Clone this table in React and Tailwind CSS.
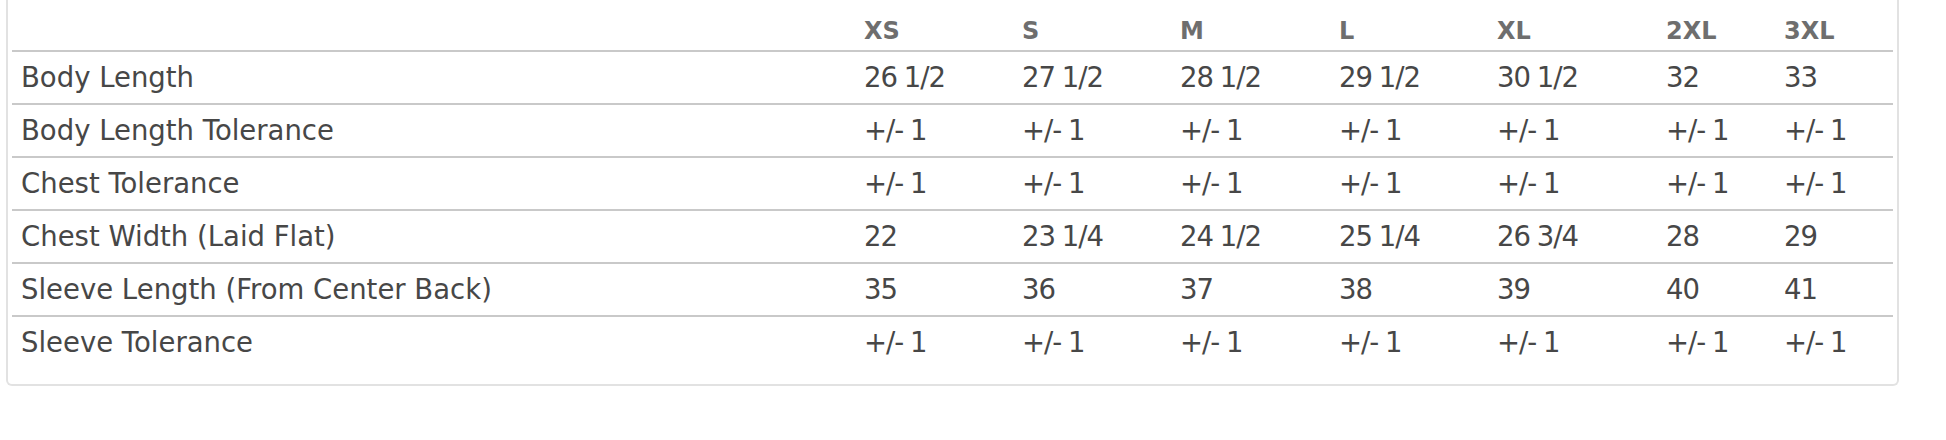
import React from "react";

const sizes = ["XS", "S", "M", "L", "XL", "2XL", "3XL"];
const rows = [
  ["Body Length", "26 1/2", "27 1/2", "28 1/2", "29 1/2", "30 1/2", "32", "33"],
  ["Body Length Tolerance", "+/- 1", "+/- 1", "+/- 1", "+/- 1", "+/- 1", "+/- 1", "+/- 1"],
  ["Chest Tolerance", "+/- 1", "+/- 1", "+/- 1", "+/- 1", "+/- 1", "+/- 1", "+/- 1"],
  ["Chest Width (Laid Flat)", "22", "23 1/4", "24 1/2", "25 1/4", "26 3/4", "28", "29"],
  ["Sleeve Length (From Center Back)", "35", "36", "37", "38", "39", "40", "41"],
  ["Sleeve Tolerance", "+/- 1", "+/- 1", "+/- 1", "+/- 1", "+/- 1", "+/- 1", "+/- 1"],
];

const cols = "grid grid-cols-[843px_158px_158px_159px_158px_169px_118px_118px]";

export default function App() {
  return (
    <div className="w-[1946px] h-[440px] bg-white pl-[6px] font-['DejaVu_Sans',sans-serif]">
      <div className="w-[1893px] border-x-2 border-b-2 border-[#e2e2e2] rounded-b-[6px] px-[4px] pb-[14px]">
        <div className={`${cols} h-[52px] border-b-2 border-[#c9c9c9] text-[24px] font-bold text-[#6e6e6e] leading-[30px]`}>
          <div className="pl-[10px] pt-[16px]"></div>
          {sizes.map((s) => (
            <div key={s} className="pl-[9px] pt-[16px]">{s}</div>
          ))}
        </div>
        {rows.map((r, i) => (
          <div
            key={r[0]}
            className={`${cols} h-[53px] ${i < rows.length - 1 ? "border-b-2 border-[#c9c9c9]" : ""} text-[27.5px] text-[#474747] leading-[51px]`}
          >
            {r.map((c, j) => (
              <div
                key={j}
                className={
                  j === 0
                    ? "pl-[9px] whitespace-nowrap"
                    : "pl-[9px] whitespace-nowrap tracking-[-1px] [word-spacing:-1px]"
                }
              >
                {c}
              </div>
            ))}
          </div>
        ))}
      </div>
    </div>
  );
}
